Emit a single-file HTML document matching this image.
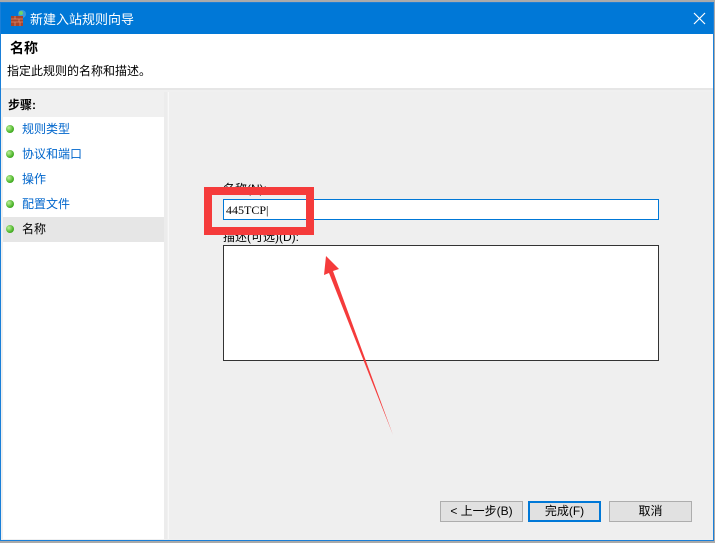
<!DOCTYPE html>
<html><head><meta charset="utf-8"><style>
*{margin:0;padding:0;box-sizing:border-box}
body{width:715px;height:543px;overflow:hidden;background:#aaa;font-family:"Liberation Sans","Noto Sans CJK SC",sans-serif;font-size:12px;position:relative}
.win{position:absolute;left:0;top:2px;width:714px;height:539px;border:1px solid #1a7fd8;background:#f0f0f0}
.title{position:absolute;left:0;top:0;width:712px;height:31px;background:#0078d7;color:#fff;font-size:13px}
.title span{position:absolute;left:29px;top:6px}
.hdr{position:absolute;left:0;top:31px;width:712px;height:56px;background:#fff;border-bottom:2px solid #e6e6e6}
.left{position:absolute;left:2px;top:89px;width:164px;height:447px;background:#fff;border-right:3px solid #ececec}
.steps{height:25px;background:#f0f0f0;font-weight:bold;padding:4px 0 0 5px;font-size:12px}
.it{position:relative;height:25px;padding:3px 0 0 19px;color:#0066cc;font-size:12px}
.it i{position:absolute;left:3px;top:8px;width:8px;height:8px;border-radius:50%;background:radial-gradient(circle at 35% 35%,#bff09a,#4cb52a 60%,#2d8a18)}
.right{position:absolute;left:167px;top:89px;width:545px;height:447px;background:#efefef;border-left:1px solid #f8f8f8}
.btn{position:absolute;top:498px;height:21px;border:1px solid #adadad;background:#e1e1e1;text-align:center;font-size:12px;line-height:19px}
</style></head><body>
<div class="win">
 <div class="title">
  <svg style="position:absolute;left:9px;top:6px" width="18" height="18" viewBox="0 0 18 18"><circle cx="12" cy="5" r="4" fill="#3a9ad9"/><circle cx="11" cy="4" r="2" fill="#6cd36a"/><rect x="1" y="7" width="12" height="10" fill="#a7442c"/><path d="M1 10h12M1 13h12M5 7v3M9 10v3M5 13v4M10 13v4" stroke="#d98c6e" stroke-width=".8"/></svg>
  <span>新建入站规则向导</span>
  <svg style="position:absolute;left:692px;top:9px" width="13" height="13"><path d="M1 1L12 12M12 1L1 12" stroke="#fff" stroke-width="1.2"/></svg>
 </div>
 <div class="hdr">
  <div style="position:absolute;left:9px;top:4px;font-weight:bold;font-size:14px">名称</div>
  <div style="position:absolute;left:6px;top:28px">指定此规则的名称和描述。</div>
 </div>
 <div class="left">
  <div class="steps">步骤:</div>
  <div class="it"><i></i>规则类型</div>
  <div class="it"><i></i>协议和端口</div>
  <div class="it"><i></i>操作</div>
  <div class="it"><i></i>配置文件</div>
  <div class="it" style="background:#e6e6e6;color:#000"><i></i>名称</div>
 </div>
 <div class="right"></div>
 <div style="position:absolute;left:222px;top:177px">名称(N):</div>
 <div style="position:absolute;left:222px;top:196px;width:436px;height:21px;background:#fff;border:1px solid #0078d7;padding:3px 0 0 2px;font-family:'Liberation Serif',serif;font-size:12px">445TCP|</div>
 <div style="position:absolute;left:222px;top:225px">描述(可选)(D):</div>
 <div style="position:absolute;left:222px;top:242px;width:436px;height:116px;background:#fff;border:1px solid #333"></div>
 <div class="btn" style="left:439px;width:83px">&lt; 上一步(B)</div>
 <div class="btn" style="left:527px;width:73px;border:2px solid #0078d7;line-height:17px">完成(F)</div>
 <div class="btn" style="left:608px;width:83px">取消</div>
</div>
<svg style="position:absolute;left:0;top:0" width="715" height="543">
 <rect x="208" y="191" width="102" height="40" fill="none" stroke="#f53b3b" stroke-width="8"/>
 <polygon points="326,256 339,269 333,271 393,435 329,273 324,275" fill="#f53b3b"/>
</svg>
</body></html>
